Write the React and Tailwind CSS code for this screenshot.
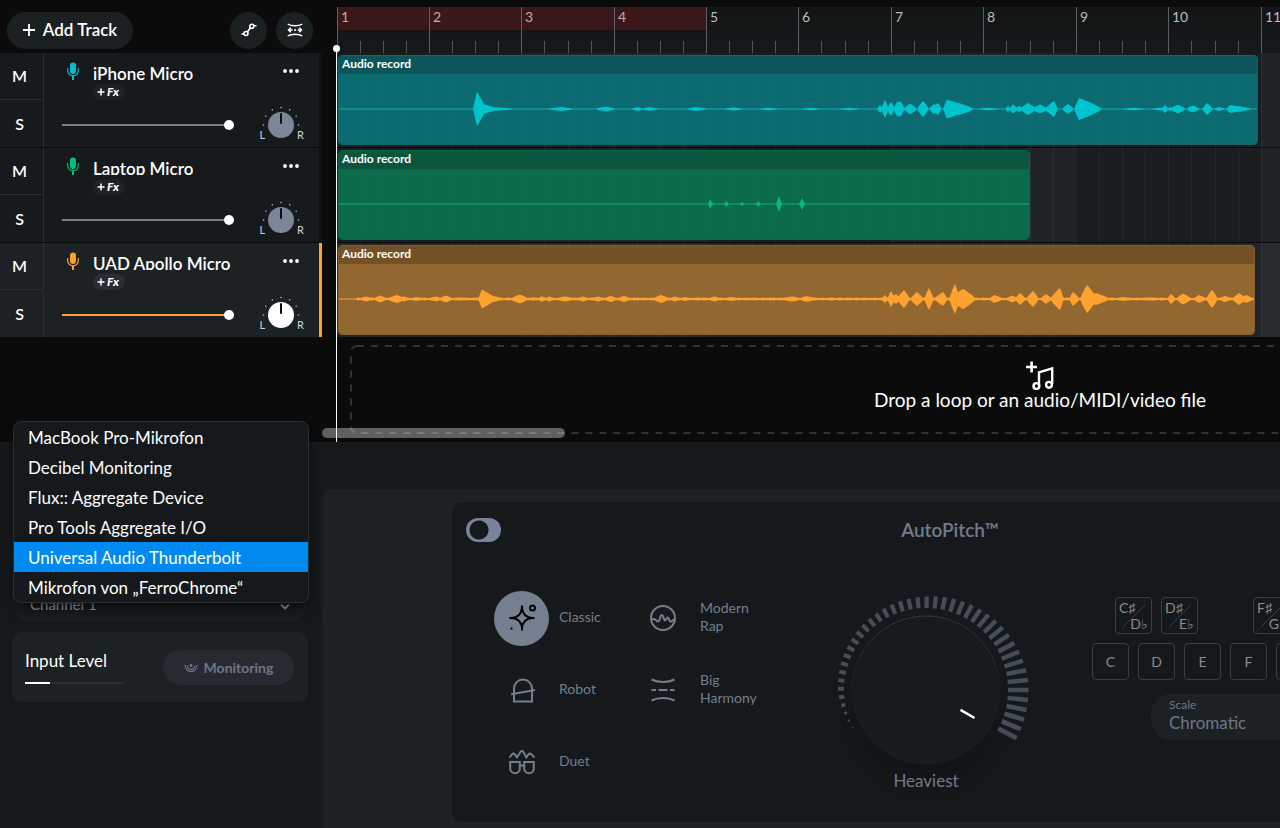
import React from "react";

const BAR_WIDTHS = [
  "w-[92px]", "w-[92px]", "w-[93px]", "w-[92px]", "w-[92px]",
  "w-[93px]", "w-[92px]", "w-[93px]", "w-[92px]", "w-[93px]", "w-[92px]",
];

// Each burst is [start, peak, end, amplitude] in timeline pixels.
const TEAL = [
  [135, 138, 146, 17], [138, 144, 158, 5], [138, 152, 176, 2], [209, 222, 234, 2],
  [257, 267, 276, 2.4], [293, 299, 303, 2], [303, 310, 320, 1.8], [348, 357, 368, 2],
  [385, 395, 404, 1.6], [420, 430, 440, 1.3], [462, 472, 482, 1.2], [500, 510, 522, 1.2],
  [539, 541, 543, 4], [543, 546, 549, 9], [549, 552, 555, 7], [555, 559, 561, 8], [558, 561, 565, 8],
  [566, 571, 577, 5.5], [579, 584, 589, 8], [591, 595, 599, 5], [594, 599, 602, 6],
  [605, 608, 630, 9.5], [610, 620, 634, 6], [640, 648, 660, 1.3],
  [667, 669, 671, 3], [671, 674, 678, 4.5], [677, 680, 684, 3], [682, 689, 696, 6],
  [694, 701, 708, 4.5], [707, 715, 718, 8], [724, 729, 734, 5],
  [736, 740, 762, 11], [744, 754, 761, 5], [782, 795, 806, 1.3], [812, 820, 826, 1.3],
  [823, 826, 829, 4], [829, 831, 834, 2], [832, 839, 846, 4.5], [848, 854, 860, 3.5],
  [864, 868, 873, 6], [875, 880, 886, 2], [888, 891, 910, 4], [892, 899, 912, 3],
];
const GREEN = [
  [370, 371, 373, 5], [386, 387, 389, 3], [402, 403, 405, 2],
  [418, 419, 421, 3], [438, 440, 442, 8], [461, 463, 465, 6],
];
const ORANGE = [
  [20, 27, 34, 2.5], [35, 41, 48, 3.5], [48, 58, 66, 4], [60, 65, 70, 2.5], [70, 77, 86, 2],
  [88, 97, 103, 2.5], [100, 107, 113, 3.5], [114, 122, 132, 1.5],
  [140, 143, 156, 9.5], [146, 152, 164, 3.5], [172, 181, 189, 4.5], [190, 194, 198, 1.8],
  [198, 203, 208, 2.5], [206, 210, 216, 2.5], [216, 226, 238, 2.5], [238, 244, 250, 2.5],
  [252, 259, 265, 2.5], [264, 272, 278, 3], [278, 285, 292, 3], [298, 305, 310, 1.4],
  [314, 322, 330, 4], [330, 336, 341, 2.5], [341, 346, 352, 2], [354, 360, 367, 1.4],
  [368, 376, 381, 2.6], [384, 392, 402, 2], [440, 454, 462, 2.6], [460, 467, 480, 2.8],
  [482, 492, 502, 1.4], [543, 546, 549, 4], [549, 552, 555, 8], [552, 557, 561, 5],
  [559, 565, 570, 9], [572, 578, 584, 7], [586, 590, 594, 11], [596, 604, 608, 7],
  [611, 616, 620, 15], [612, 624, 636, 10], [651, 655, 664, 4], [668, 673, 679, 3.5],
  [677, 681, 686, 6], [688, 694, 699, 8], [702, 707, 712, 5], [712, 721, 724, 11],
  [731, 734, 740, 7], [742, 748, 757, 14], [745, 757, 770, 6], [775, 784, 795, 2],
  [800, 812, 825, 1.6], [829, 832, 836, 5], [838, 844, 852, 5.5], [855, 860, 867, 4],
  [868, 873, 878, 9], [880, 886, 892, 3], [894, 900, 906, 6], [902, 907, 914, 4],
];

const TRACKS = [
  {
    name: "iPhone Micro", clip: 920, bursts: TEAL, noise: 0,
    mic: "text-[#00c0cb]", knob: "text-[#7b8798]", wave: "text-[#00c4cd]",
    range: "[&::-webkit-slider-runnable-track]:bg-[#76808f]",
    title: "bg-[#0c595f]/95", body: "bg-[#0c6f76]/95", edge: "border-[#0c666c]",
    line: "stroke-[#0a8b92]",
  },
  {
    name: "Laptop Micro", clip: 692, bursts: GREEN, noise: 0,
    mic: "text-[#08bd7c]", knob: "text-[#7b8798]", wave: "text-[#06b777]",
    range: "[&::-webkit-slider-runnable-track]:bg-[#76808f]",
    title: "bg-[#0c593f]/95", body: "bg-[#0c704d]/95", edge: "border-[#0c6546]",
    line: "stroke-[#0b9765]",
  },
  {
    name: "UAD Apollo Micro", clip: 917, bursts: ORANGE, noise: 1, selected: true,
    mic: "text-[#ffa12e]", knob: "text-white", wave: "text-[#ffa12e]",
    range: "[&::-webkit-slider-runnable-track]:bg-[#ffa12e]",
    title: "bg-[#795226]/95", body: "bg-[#996a30]/95", edge: "border-[#8a5f2b]",
    line: "stroke-[#e08f2e]",
  },
];

function envelope(bursts, length, noise) {
  const top = [];
  const bottom = [];
  for (let x = 0; x < length; x += 1) {
    let a = noise && x > 17 ? 1 + 0.6 * Math.abs(Math.sin(x * 0.9) * Math.cos(x * 0.37)) : 0.3;
    for (const [s, p, e, amp] of bursts) {
      if (x < s || x > e) continue;
      const t = x <= p ? (x - s + 0.5) / (p - s + 0.5) : (e - x + 0.5) / (e - p + 0.5);
      a = Math.max(a, amp * Math.pow(Math.min(t, 1), 0.75));
    }
    top.push(`${x},${(35 - a).toFixed(2)}`);
    bottom.unshift(`${x},${(35 + a).toFixed(2)}`);
  }
  return `M${top.join("L")}L${bottom.join("L")}Z`;
}

function Mic({ className }) {
  return (
    <svg viewBox="0 0 12 18" className={`h-[18px] w-3 shrink-0 ${className}`} fill="none" stroke="currentColor" aria-hidden="true">
      <rect x="3" y="0.5" width="6" height="11.5" rx="3" fill="currentColor" stroke="none" />
      <path d="M0.7 6v2.6a5.3 5.3 0 0 0 10.6 0V6M6 13.8V18" strokeWidth="1.2" />
      <path d="M6 14v4" strokeWidth="2" />
    </svg>
  );
}

function PanKnob({ className }) {
  const dots = Array.from({ length: 7 }, (_, i) => {
    const t = ((180 + i * 30) * Math.PI) / 180;
    return [20 + 17.5 * Math.cos(t), 20 + 17.5 * Math.sin(t)];
  });
  return (
    <div className="flex items-end text-[11px] leading-3 text-[#d0d3d6]">
      <span>L</span>
      <svg viewBox="0 0 40 36" className={`-mx-1 h-9 w-10 ${className}`} aria-hidden="true">
        {dots.map(([x, y]) => (
          <circle key={x} cx={x} cy={y} r="0.8" fill="#b4b8bc" />
        ))}
        <circle cx="20" cy="20" r="13" fill="currentColor" />
        <path d="M20 9v9" stroke="#0c0e10" strokeWidth="2" strokeLinecap="round" />
      </svg>
      <span>R</span>
    </div>
  );
}

function TrackHeader({ track }) {
  return (
    <div className={`flex h-[95px] border-b border-[#0a0a0b] ${track.selected ? "bg-[#1c2124]" : "bg-[#161a1c]"}`}>
      <div className="flex w-11 flex-col border-r border-[#2a2e31] text-[16px] font-semibold text-white">
        <button className="h-[47px] border-b border-[#2a2e31] pr-1" aria-label={`Mute ${track.name}`}>M</button>
        <button className="flex-1 pr-1" aria-label={`Solo ${track.name}`}>S</button>
      </div>
      <div className="flex flex-1 flex-col justify-between pt-[9px] pb-[6px]">
        <div className="flex items-start pr-[19px] pl-[23px]">
          <Mic className={track.mic} />
          <div className="flex flex-col items-start pt-[2px] pl-[14px]">
            <div className="h-4 overflow-hidden text-[17px] leading-5 font-semibold text-white">{track.name}</div>
            <button className={`mt-1 flex h-4 items-center rounded-full px-1 text-[12px] font-black text-white italic ${track.selected ? "bg-[#2a2c33]" : "bg-[#1e2225]"}`}>
              <svg viewBox="0 0 8 8" className="mr-[2px] h-2 w-2" aria-hidden="true">
                <path d="M4 0.5v7M0.5 4h7" stroke="currentColor" strokeWidth="1.5" />
              </svg>
              <span className="pr-[2px]">Fx</span>
            </button>
          </div>
          <button className="ml-auto pt-[7px]" aria-label={`${track.name} options`}>
            <svg viewBox="0 0 18 4" className="h-1 w-[18px] fill-white" aria-hidden="true">
              <circle cx="3" cy="2" r="1.9" />
              <circle cx="9" cy="2" r="1.9" />
              <circle cx="15" cy="2" r="1.9" />
            </svg>
          </button>
        </div>
        <div className="flex items-end justify-between pr-[15px] pl-[18px]">
          <input
            type="range"
            defaultValue={100}
            aria-label={`${track.name} volume`}
            className={`mb-[11px] h-[10px] w-[172px] appearance-none bg-transparent [&::-webkit-slider-runnable-track]:h-[2px] [&::-webkit-slider-thumb]:-mt-1 [&::-webkit-slider-thumb]:h-[10px] [&::-webkit-slider-thumb]:w-[10px] [&::-webkit-slider-thumb]:appearance-none [&::-webkit-slider-thumb]:rounded-full [&::-webkit-slider-thumb]:bg-white ${track.range}`}
          />
          <PanKnob className={track.knob} />
        </div>
      </div>
      <div className={`w-[3px] ${track.selected ? "bg-[#ffa12e]" : "bg-[#0f1112]"}`} />
    </div>
  );
}

function Ruler() {
  return (
    <div className="mt-[7px] flex h-[46px] bg-gradient-to-b from-[#121415] to-[#16191b]">
      {BAR_WIDTHS.map((w, i) => (
        <div key={i} className={`flex shrink-0 flex-col justify-between border-l border-[#5d6062] ${w}`}>
          <div className={`h-[23px] pl-[3px] text-[14px] leading-5 ${i < 4 ? "bg-[#3c1719] text-[#c3a9aa]" : "text-[#b9bcbe]"}`}>
            {i + 1}
          </div>
          <div className="flex h-3">
            <div className="flex-1" />
            <div className="flex-1 border-l border-[#515456]" />
            <div className="flex-1 border-l border-[#515456]" />
            <div className="flex-1 border-l border-[#515456]" />
          </div>
        </div>
      ))}
    </div>
  );
}

function Lane({ track }) {
  return (
    <div className={`grid h-[95px] border-b border-[#0a0a0b] ${track.selected ? "bg-[#22262b]" : "bg-[#191d1f]"}`}>
      <div className="flex [grid-area:1/1]">
        {BAR_WIDTHS.map((w, i) => (
          <div key={i} className={`flex shrink-0 ${w} ${i % 4 > 1 ? "bg-white/3" : ""}`}>
            <div className="flex-1 border-l border-white/5" />
            <div className="flex-1 border-l border-white/5" />
            <div className="flex-1 border-l border-white/5" />
            <div className="flex-1 border-l border-white/5" />
          </div>
        ))}
      </div>
      <div
        className={`mt-[2px] ml-px flex h-[90px] flex-col overflow-hidden rounded border [grid-area:1/1] ${track.edge}`}
        style={{ width: track.clip }}
      >
        <div className={`h-[18px] pl-[3px] text-[12px] leading-4 font-bold text-white ${track.title}`}>Audio record</div>
        <div className={`flex-1 ${track.body}`}>
          <svg className={`h-[70px] w-full fill-current ${track.wave}`} aria-hidden="true">
            <path d={`M0 35H${track.clip}`} className={track.line} strokeWidth="1.2" />
            <path d={envelope(track.bursts, track.clip, track.noise)} />
          </svg>
        </div>
      </div>
    </div>
  );
}

function DropZone() {
  return (
    <div className="relative mt-[7px] ml-[13px] flex h-[89px] w-[1380px] flex-col items-center pt-[16px] text-white">
      <svg className="absolute inset-0 h-full w-full" aria-hidden="true">
        <rect x="1" y="1" width="1378" height="87" rx="6" fill="none" stroke="#2e3337" strokeWidth="2" strokeDasharray="7 7" />
      </svg>
      <svg viewBox="0 0 28 29" className="h-[29px] w-7" fill="none" stroke="currentColor" aria-hidden="true">
        <path d="M5.6 0.5v11M0 6h11" strokeWidth="2.6" />
        <path d="M13 24.6V11.4L26.2 7.4V23" strokeWidth="2.4" />
        <circle cx="10.4" cy="25" r="2.9" strokeWidth="2.4" />
        <circle cx="23" cy="23.8" r="2.9" strokeWidth="2.4" />
      </svg>
      <p className="text-[19px] leading-5">Drop a loop or an audio/MIDI/video file</p>
    </div>
  );
}

const DEVICES = [
  "MacBook Pro-Mikrofon",
  "Decibel Monitoring",
  "Flux:: Aggregate Device",
  "Pro Tools Aggregate I/O",
  "Universal Audio Thunderbolt",
  "Mikrofon von „FerroChrome“",
];

function InputPanel() {
  return (
    <section className="relative w-[322px] shrink-0 pr-[14px] pl-3">
      <div className="mt-[134px] flex h-[46px] items-end rounded-[20px] bg-[#1a1e21] px-[18px] pb-2 text-[#a5a9ac]">
        <select aria-label="Input channel" className="h-5 flex-1 appearance-none bg-transparent text-[15px] leading-5">
          <option>Channel 1</option>
        </select>
        <svg viewBox="0 0 10 6" className="mb-1 h-[6px] w-[10px]" fill="none" stroke="currentColor" strokeWidth="1.8" aria-hidden="true">
          <path d="M1 0.5l4 4 4-4" />
        </svg>
      </div>
      <ul role="listbox" aria-label="Input device" className="absolute -top-[21px] left-[13px] z-10 w-[296px] overflow-hidden rounded-lg border border-[#2b2f32] bg-[#15191c] shadow-lg shadow-black/50">
        {DEVICES.map((d) => (
          <li key={d} role="option" aria-selected={d.startsWith("Universal")}>
            <button className={`block h-[30px] w-full px-[14px] pt-px text-left text-[17px] leading-[30px] text-white ${d.startsWith("Universal") ? "bg-[#008af0]" : ""}`}>
              {d}
            </button>
          </li>
        ))}
      </ul>
      <div className="mt-[10px] flex h-[70px] justify-between rounded-[10px] bg-[#1c2124] pr-[14px] pl-[13px]">
        <div className="w-[100px] pt-[19px]">
          <div className="text-[17px] leading-5 text-white" id="level">Input Level</div>
          <div role="meter" aria-labelledby="level" aria-valuenow={25} className="mt-[11px] h-[2px] bg-[#2a2e31]">
            <div className="h-full w-1/4 bg-white" />
          </div>
        </div>
        <button className="mt-[18px] flex h-[35px] w-[131px] items-center justify-center gap-[6px] rounded-full bg-[#272a30] text-[14px] font-bold text-[#6e7888]">
          <svg viewBox="0 0 14 10" className="h-[10px] w-[14px]" fill="none" stroke="currentColor" strokeWidth="1.1" aria-hidden="true">
            <circle cx="7" cy="2.4" r="1.5" fill="currentColor" stroke="none" />
            <path d="M0.8 2.2c.7 4 3.3 6.4 6.2 6.4s5.500-2.400 6.200-6.400M3 2.400c.5 2.500 2 4 4 4s3.500-1.500 4-4" />
          </svg>
          Monitoring
        </button>
      </div>
    </section>
  );
}

const ICON = { fill: "none", stroke: "currentColor", strokeWidth: 2, "aria-hidden": true, viewBox: "0 0 28 28", className: "h-7 w-7" };

const ClassicIcon = () => (
  <svg {...ICON}>
    <path d="M14 3.500C14.400 10 17.500 13.600 24.500 14C17.500 14.400 14.400 18 14 24.500C13.600 18 10.500 14.400 3.500 14C10.500 13.600 13.600 10 14 3.500Z" />
    <path d="M14 1.500v3M14 23.500v3M1.500 14h3M23.500 14h3" />
    <circle cx="24.500" cy="4" r="2.500" />
    <path d="M2.500 24.500h2" />
  </svg>
);
const RapIcon = () => (
  <svg {...ICON}>
    <circle cx="14" cy="14" r="12" />
    <path d="M2.500 15.500c2.500-1.500 3.700-.4 5.200 1.300 1.200 1.400 2.300.6 2.900-1.200l1.100-3.600c.4-1.400 1.700-1.400 2.200 0l1.200 3.400c.5 1.300 1.500 1.300 2 0l.4-.9c.5-1.200 1.700-1.200 2.200 0l.8 2c.7 1.600 2 1.400 2.900.2.700-.9 1.500-1.400 2.300-1.300" />
  </svg>
);
const RobotIcon = () => (
  <svg {...ICON}>
    <path d="M6 25.500V12.500a9 9 0 0 1 18 0V25.500ZM3 18.200L27 14" />
  </svg>
);
const HarmonyIcon = () => (
  <svg {...ICON}>
    <path d="M2.500 3.500C9 6.800 19 6.800 25.500 3.500M2.500 24.500C9 21.200 19 21.200 25.500 24.500M2.500 14h4.500M9.500 14h9M21 14h4.500" />
  </svg>
);
const DuetIcon = () => (
  <svg {...ICON}>
    <path d="M1.500 9.500L4 6.300c.8-1.100 2-1.100 2.800 0L9 9.300 12.400 4c.8-1.300 2.200-1.300 3 0L18.300 9.300 20.500 6.300c.8-1.100 2-1.100 2.800 0L26.500 9.500" />
    <path d="M2.200 14h9.600v6.500a4.800 4.800 0 0 1-9.600 0ZM16.200 14h9.600v6.500a4.800 4.800 0 0 1-9.600 0ZM11.800 17.500h4.400" />
  </svg>
);

const PRESETS = [
  { label: "Classic", Icon: ClassicIcon, on: true },
  { label: "Modern Rap", Icon: RapIcon },
  { label: "Robot", Icon: RobotIcon },
  { label: "Big Harmony", Icon: HarmonyIcon },
  { label: "Duet", Icon: DuetIcon },
];

function AmountDial() {
  const ticks = Array.from({ length: 43 }, (_, i) => {
    const len = i < 5 ? 1.2 + i : i < 21 ? 6 + (i - 5) * 0.34 : i < 37 ? 11.5 + (i - 21) * 0.6 : 20.5;
    const width = i < 4 ? 1 + i * 0.9 : 3.8 + i * 0.02;
    return { len, width, angle: 152.8 + i * 5.6 };
  });
  return (
    <div className="flex w-[210px] shrink-0 flex-col items-center">
      <svg viewBox="-105 -105 210 180" className="h-[180px] w-[210px] overflow-visible" role="img" aria-label="Effect amount">
        <defs>
          <linearGradient id="rim" x1="0" y1="0" x2="0" y2="1">
            <stop offset="0" stopColor="#34383b" />
            <stop offset="0.5" stopColor="#1a1e20" />
          </linearGradient>
          <radialGradient id="shade">
            <stop offset="0.5" stopColor="#0e1012" stopOpacity="0.6" />
            <stop offset="1" stopColor="#0e1012" stopOpacity="0" />
          </radialGradient>
        </defs>
        <circle cx="0" cy="24" r="96" fill="url(#shade)" />
        {ticks.map((t) => (
          <path key={t.angle} d={`M82 0h${t.len}`} transform={`rotate(${t.angle})`} stroke="#454e58" strokeWidth={t.width} />
        ))}
        <circle r="74" fill="#171b1d" stroke="url(#rim)" />
        <path d="M34.500 19.800L48.500 28" stroke="#fff" strokeWidth="2.500" />
      </svg>
      <span className="mt-1 text-[17px] leading-6 text-[#707b89]">Heaviest</span>
    </div>
  );
}

function SharpKey({ sharp, flat }) {
  return (
    <button className="flex h-[37px] w-[37px] shrink-0 flex-col justify-between rounded border border-[#393f44] bg-[linear-gradient(135deg,transparent_49%,#393f44_49%,#393f44_51%,transparent_51%)] bg-[length:22px_22px] bg-center bg-no-repeat px-[3px] py-[2px] text-[14px] leading-4 text-[#8b8d8e]">
      <span className="text-left">{sharp}</span>
      <span className="text-right">{flat}</span>
    </button>
  );
}

function Keyboard() {
  return (
    <div className="flex shrink-0 flex-col">
      <div className="flex gap-[9px] pl-[23px]">
        <SharpKey sharp="C♯" flat="D♭" />
        <SharpKey sharp="D♯" flat="E♭" />
        <div className="w-[37px]" />
        <SharpKey sharp="F♯" flat="G♭" />
        <SharpKey sharp="G♯" flat="A♭" />
        <SharpKey sharp="A♯" flat="B♭" />
      </div>
      <div className="mt-[9px] flex gap-[9px]">
        {["C", "D", "E", "F", "G", "A", "B"].map((k) => (
          <button key={k} className="h-[37px] w-[37px] shrink-0 rounded border border-[#393f44] text-[14px] text-[#8b8d8e]">{k}</button>
        ))}
      </div>
      <div className="mt-[14px] ml-[59px] flex h-[46px] w-[195px] flex-col rounded-[20px] bg-[#1c2124] px-[18px] pt-[3px] text-[#6d7787]">
        <label htmlFor="scale" className="text-[12px] leading-4">Scale</label>
        <select id="scale" className="appearance-none bg-transparent text-[17px] leading-5">
          <option>Chromatic</option>
        </select>
      </div>
    </div>
  );
}

function AutoPitch() {
  return (
    <section className="h-[320px] w-[996px] shrink-0 rounded-[10px] bg-[#15191c] pt-4">
      <div className="grid grid-cols-[1fr_auto_1fr] items-center pl-[14px]">
        <label className="flex">
          <input type="checkbox" aria-label="AutoPitch" className="h-6 w-[35px] appearance-none rounded-full bg-[#78849a] bg-[radial-gradient(circle_at_13px_12px,#15191c_9px,transparent_10px)]" />
        </label>
        <h2 className="pr-[14px] text-[19px] leading-6 font-semibold text-[#717c8a]">AutoPitch™</h2>
      </div>
      <div className="flex items-start pl-[42px]">
        <div className="mt-10 grid w-[327px] shrink-0 grid-cols-[141px_141px]">
          {PRESETS.map(({ label, Icon, on }) => (
            <button key={label} className="flex h-[72px] items-center gap-[10px] text-left text-[14px] leading-[18px] text-[#747f8c]">
              <span className={`flex h-[55px] w-[55px] shrink-0 items-center justify-center rounded-full ${on ? "bg-[#74808f] text-black" : "bg-[#171a1d]"}`}>
                <Icon />
              </span>
              <span className="w-[62px] pb-[2px]">{label}</span>
            </button>
          ))}
        </div>
        <div className="mt-[43px]">
          <AmountDial />
        </div>
        <div className="mt-[55px] ml-[61px]">
          <Keyboard />
        </div>
      </div>
    </section>
  );
}

export default function App() {
  return (
    <div className="flex min-h-screen w-full flex-col overflow-hidden bg-[#15191c] font-['Lato','Noto_Sans',sans-serif]">
      <main className="flex h-[442px] bg-[#0b0b0b]">
        <aside className="w-[322px] shrink-0">
          <div className="flex h-[53px] items-center pt-[7px] pl-[7px]">
            <button className="flex h-[37px] w-[126px] items-center justify-center gap-2 rounded-full bg-[#1b2023] text-[17px] font-semibold text-white">
              <svg viewBox="0 0 12 12" className="h-3 w-3" aria-hidden="true">
                <path d="M6 0v12M0 6h12" stroke="currentColor" strokeWidth="1.800" />
              </svg>
              Add Track
            </button>
            <button aria-label="Show automation" className="ml-auto flex h-[37px] w-[37px] items-center justify-center rounded-full bg-[#1b2023] text-white">
              <svg viewBox="0 0 16 14" className="h-[14px] w-4" fill="none" stroke="currentColor" strokeWidth="1.600" aria-hidden="true">
                <circle cx="5" cy="10.500" r="2" />
                <circle cx="10.800" cy="3.200" r="2" />
                <path d="M0.500 11H3M6.300 8.900L9.500 4.800M12.800 2.700H15.500" />
              </svg>
            </button>
            <button aria-label="Stretch to fit" className="mr-[9px] ml-[9px] flex h-[37px] w-[37px] items-center justify-center rounded-full bg-[#1b2023] text-white">
              <svg viewBox="0 0 16 14" className="h-[14px] w-4" fill="none" stroke="currentColor" strokeWidth="1.500" aria-hidden="true">
                <path d="M0.700 1C4 3.300 12 3.300 15.300 1M0.700 13C4 10.700 12 10.700 15.300 13" />
                <path d="M3.800 4.700L1.500 7l2.300 2.300M12.200 4.700L14.500 7l-2.300 2.300M1.500 7h4M7 7h2M10.500 7h4" />
              </svg>
            </button>
          </div>
          {TRACKS.map((t) => (
            <TrackHeader key={t.name} track={t} />
          ))}
        </aside>
        <section className="relative min-w-0 flex-1 overflow-hidden pl-[15px]">
          <Ruler />
          {TRACKS.map((t) => (
            <Lane key={t.name} track={t} />
          ))}
          <DropZone />
          <div className="absolute bottom-1 left-0 h-[10px] w-[243px] rounded-full bg-white/35" />
          <div className="absolute top-12 bottom-0 left-[14px] w-px bg-white" />
          <div className="absolute top-[45px] left-[11px] h-[7px] w-[7px] rounded-full bg-white" />
        </section>
      </main>
      <div className="flex flex-1">
        <InputPanel />
        <section className="mt-[47px] flex min-w-0 flex-1 overflow-hidden rounded-tl-[10px] bg-[#1c2124] pt-[13px] pb-[6px] pl-[130px]">
          <AutoPitch />
        </section>
      </div>
    </div>
  );
}
